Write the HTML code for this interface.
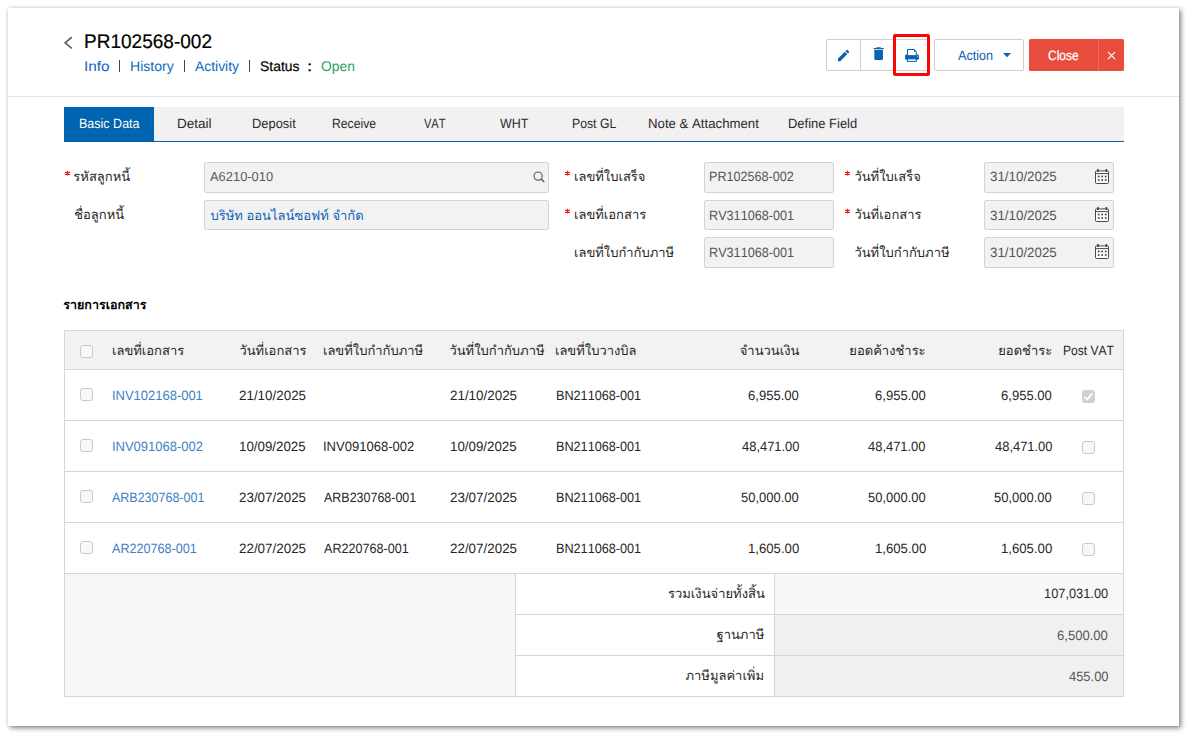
<!DOCTYPE html>
<html lang="th"><head><meta charset="utf-8"><title>PR102568-002</title>
<style>
html,body{margin:0;padding:0}
body{width:1187px;height:734px;position:relative;overflow:hidden;background:#fff;font-family:"Liberation Sans",sans-serif;font-kerning:none;text-rendering:geometricPrecision}
div,span.t,svg.th,svg.ic{position:absolute;box-sizing:border-box}
span.t{white-space:nowrap;line-height:normal;transform-origin:0 0}
svg.th,svg.ic{overflow:visible}
svg.th text{font-family:"Liberation Sans",sans-serif;font-size:13px}
a{color:inherit;text-decoration:none}
</style></head><body>
<div style="left:8px;top:8px;width:1171px;height:718px;background:#fff;box-shadow:2px 2px 5px rgba(0,0,0,.48),0 0 3px rgba(0,0,0,.1)"></div>
<div style="left:8px;top:96px;width:1171px;height:1px;background:#e3e3e3"></div>
<svg class="ic" style="left:62px;top:35px" width="14" height="16"><path d="M9.8 2.2 L3.2 7.8 L9.8 13.4" fill="none" stroke="#595959" stroke-width="1.6"/></svg>
<span class="t" style="left:83.64px;top:30.80px;font-size:19.7px;color:#000;transform:scaleX(0.9667);-webkit-text-stroke:.2px #000;">PR102568-002</span>
<span class="t" style="left:83.58px;top:58.20px;font-size:14px;color:#0d69bd;transform:scaleX(1.0991);">Info</span>
<div style="left:119px;top:60px;width:1px;height:12px;background:#4b3d52"></div>
<span class="t" style="left:129.55px;top:58.20px;font-size:14px;color:#0d69bd;transform:scaleX(1.0051);">History</span>
<div style="left:184px;top:60px;width:1px;height:12px;background:#4b3d52"></div>
<span class="t" style="left:194.87px;top:58.20px;font-size:14px;color:#0d69bd;transform:scaleX(0.9913);">Activity</span>
<div style="left:249px;top:60px;width:1px;height:12px;background:#4b3d52"></div>
<span class="t" style="left:259.77px;top:58.20px;font-size:14px;color:#000;transform:scaleX(0.9936);-webkit-text-stroke:.2px #000;">Status</span>
<span class="t" style="left:306.87px;top:58.20px;font-size:14px;color:#000;transform:scaleX(1.3503);-webkit-text-stroke:.3px #000;">:</span>
<span class="t" style="left:320.94px;top:58.20px;font-size:14px;color:#2aa05c;transform:scaleX(0.9885);">Open</span>
<div style="left:826px;top:39px;width:104px;height:32px;border:1px solid #cfcfcf;border-radius:2px;background:#fff"></div>
<div style="left:860px;top:40px;width:1px;height:30px;background:#cfcfcf"></div>
<div style="left:894px;top:40px;width:1px;height:30px;background:#cfcfcf"></div>
<svg class="ic" style="left:835.92px;top:47.92px" width="15.00" height="15.00" viewBox="0 0 24 24"><path fill="#0b62b0" d="M3 17.25V21h3.75L17.81 9.94l-3.75-3.75L3 17.25zM20.71 7.04c.39-.39.39-1.02 0-1.41l-2.34-2.34c-.39-.39-1.02-.39-1.41 0l-1.83 1.83 3.75 3.75 1.83-1.83z"/></svg>
<svg class="ic" style="left:869.70px;top:45.44px" width="17.28" height="17.28" viewBox="0 0 24 24"><path fill="#0b62b0" d="M6 19c0 1.1.9 2 2 2h8c1.1 0 2-.9 2-2V7H6v12zM19 4h-3.5l-1-1h-5l-1 1H5v2h14V4z"/></svg>
<svg class="ic" style="left:904px;top:48px" width="16" height="15" viewBox="0 0 16 15"><rect x="1.1" y="6.5" width="13.8" height="5.3" rx="1.2" fill="#0b62b0"/><path d="M3.5 7.7V1.5h6.7l2.1 2.1v4.1z" fill="#fff" stroke="#0b62b0" stroke-width="1"/><path d="M10 1.4v2.4h2.4z" fill="#0b62b0"/><rect x="3.5" y="10.9" width="8.8" height="2.5" fill="#fff" stroke="#0b62b0" stroke-width="1"/><circle cx="13.5" cy="8.3" r=".55" fill="#cfe0f0"/></svg>
<div style="left:893px;top:33.6px;width:37.4px;height:42.5px;border:3px solid #fb0606;border-radius:2px"></div>
<div style="left:934px;top:39px;width:90px;height:32px;border:1px solid #cfcfcf;border-radius:2px;background:#fff"></div>
<span class="t" style="left:957.88px;top:47.90px;font-size:13.5px;color:#0b62b0;transform:scaleX(0.9367);">Action</span>
<svg class="ic" style="left:1003px;top:53.3px" width="8" height="5"><path d="M0 0h8L4 4.2z" fill="#0b62b0"/></svg>
<div style="left:1029px;top:39px;width:95px;height:32px;background:#e74c3c;border-radius:1.5px"></div>
<div style="left:1098px;top:39px;width:1px;height:32px;background:#ec6a5c"></div>
<span class="t" style="left:1048.39px;top:47.90px;font-size:13.5px;color:#fff;transform:scaleX(0.8878);-webkit-text-stroke:.25px #fff;">Close</span>
<svg class="ic" style="left:1107px;top:50.8px" width="9" height="9"><path d="M.9 .9l7.2 7.2M8.1 .9L.9 8.1" stroke="#fff" stroke-width="1.1" fill="none"/></svg>
<div style="left:64px;top:107px;width:1060px;height:34px;background:#f1f1f1"></div>
<div style="left:64px;top:141px;width:1060px;height:1px;background:#0a5fae"></div>
<div style="left:64px;top:107px;width:90px;height:35px;background:#0064b1"></div>
<span class="t" style="left:78.67px;top:116.30px;font-size:13.5px;color:#fff;transform:scaleX(0.9272);">Basic Data</span>
<span class="t" style="left:176.89px;top:116.30px;font-size:13.5px;color:#2b2b2b;transform:scaleX(1.0029);">Detail</span>
<span class="t" style="left:252.34px;top:116.30px;font-size:13.5px;color:#2b2b2b;transform:scaleX(0.9559);">Deposit</span>
<span class="t" style="left:332.00px;top:116.30px;font-size:13.5px;color:#2b2b2b;transform:scaleX(0.9030);">Receive</span>
<span class="t" style="left:423.95px;top:116.30px;font-size:13.5px;color:#2b2b2b;transform:scaleX(0.8190);">VAT</span>
<span class="t" style="left:500.25px;top:116.30px;font-size:13.5px;color:#2b2b2b;transform:scaleX(0.9220);">WHT</span>
<span class="t" style="left:571.90px;top:116.30px;font-size:13.5px;color:#2b2b2b;transform:scaleX(0.9065);">Post GL</span>
<span class="t" style="left:648.22px;top:116.30px;font-size:13.5px;color:#2b2b2b;transform:scaleX(0.9786);">Note &amp; Attachment</span>
<span class="t" style="left:787.94px;top:116.30px;font-size:13.5px;color:#2b2b2b;transform:scaleX(0.9606);">Define Field</span>
<svg class="ic" style="left:63.8px;top:170.2px" width="7" height="7"><path d="M3.5 .8v4.8M1 2l5 2.4M6 2L1 4.4" stroke="#ee1111" stroke-width="1.15" fill="none"/></svg>
<svg class="ic" style="left:563.8px;top:170.2px" width="7" height="7"><path d="M3.5 .8v4.8M1 2l5 2.4M6 2L1 4.4" stroke="#ee1111" stroke-width="1.15" fill="none"/></svg>
<svg class="ic" style="left:563.8px;top:208.2px" width="7" height="7"><path d="M3.5 .8v4.8M1 2l5 2.4M6 2L1 4.4" stroke="#ee1111" stroke-width="1.15" fill="none"/></svg>
<svg class="ic" style="left:844.0px;top:170.2px" width="7" height="7"><path d="M3.5 .8v4.8M1 2l5 2.4M6 2L1 4.4" stroke="#ee1111" stroke-width="1.15" fill="none"/></svg>
<svg class="ic" style="left:844.0px;top:208.2px" width="7" height="7"><path d="M3.5 .8v4.8M1 2l5 2.4M6 2L1 4.4" stroke="#ee1111" stroke-width="1.15" fill="none"/></svg>
<svg class="th" role="img" aria-label="รหัสลูกหนี้" style="left:72.10px;top:166.17px" width="58.50" height="20.11"><text x="1.36" y="14.93" fill="#262626">รหัสลูกหนี้</text></svg>
<svg class="th" role="img" aria-label="ชื่อลูกหนี้" style="left:72.50px;top:204.47px" width="51.90" height="20.11"><text x="1.18" y="14.93" fill="#262626">ชื่อลูกหนี้</text></svg>
<div style="left:204px;top:162px;width:345px;height:31px;background:#f2f2f2;border:1px solid #d4d4d4;border-radius:2px"></div>
<span class="t" style="left:210.17px;top:169.10px;font-size:13px;color:#5a5a5a;transform:scaleX(0.9924);">A6210-010</span>
<svg class="ic" style="left:532px;top:170px" width="14" height="14"><circle cx="6.1" cy="6.1" r="4.1" fill="none" stroke="#555" stroke-width="1.1"/><path d="M9.1 9.1l3.1 2.9" stroke="#555" stroke-width="1.4"/></svg>
<div style="left:204px;top:200px;width:345px;height:30px;background:#f2f2f2;border:1px solid #d4d4d4;border-radius:2px"></div>
<svg class="th" role="img" aria-label="บริษัท ออนไลน์ซอฟท์ จำกัด" style="left:208.70px;top:206.85px" width="153.90" height="15.02"><text x="1.53" y="12.95" fill="#0b62b0">บริษัท ออนไลน์ซอฟท์ จำกัด</text></svg>
<svg class="th" role="img" aria-label="เลขที่ใบเสร็จ" style="left:572.90px;top:165.85px" width="71.00" height="16.61"><text x="0.97" y="14.55" fill="#262626">เลขที่ใบเสร็จ</text></svg>
<svg class="th" role="img" aria-label="เลขที่เอกสาร" style="left:572.90px;top:204.15px" width="71.70" height="16.61"><text x="0.99" y="14.55" fill="#262626">เลขที่เอกสาร</text></svg>
<svg class="th" role="img" aria-label="เลขที่ใบกำกับภาษี" style="left:572.90px;top:241.75px" width="100.00" height="16.61"><text x="0.97" y="14.55" fill="#262626">เลขที่ใบกำกับภาษี</text></svg>
<div style="left:704px;top:162px;width:130px;height:31px;background:#f2f2f2;border:1px solid #d4d4d4;border-radius:2px"></div>
<div style="left:704px;top:200px;width:130px;height:30px;background:#f2f2f2;border:1px solid #d4d4d4;border-radius:2px"></div>
<div style="left:704px;top:237px;width:130px;height:31px;background:#f2f2f2;border:1px solid #d4d4d4;border-radius:2px"></div>
<span class="t" style="left:709.27px;top:169.40px;font-size:13.5px;color:#555;transform:scaleX(0.9333);">PR102568-002</span>
<span class="t" style="left:709.26px;top:207.70px;font-size:13.5px;color:#555;transform:scaleX(0.9365);">RV311068-001</span>
<span class="t" style="left:709.26px;top:245.30px;font-size:13.5px;color:#555;transform:scaleX(0.9365);">RV311068-001</span>
<svg class="th" role="img" aria-label="วันที่ใบเสร็จ" style="left:853.10px;top:165.85px" width="64.70" height="16.61"><text x="1.43" y="14.55" fill="#262626">วันที่ใบเสร็จ</text></svg>
<svg class="th" role="img" aria-label="วันที่เอกสาร" style="left:853.10px;top:204.15px" width="65.40" height="16.61"><text x="1.43" y="14.55" fill="#262626">วันที่เอกสาร</text></svg>
<svg class="th" role="img" aria-label="วันที่ใบกำกับภาษี" style="left:853.10px;top:241.75px" width="93.70" height="16.61"><text x="1.42" y="14.55" fill="#262626">วันที่ใบกำกับภาษี</text></svg>
<div style="left:984px;top:162px;width:130px;height:31px;background:#f2f2f2;border:1px solid #d4d4d4;border-radius:2px"></div>
<span class="t" style="left:989.89px;top:169.40px;font-size:13.5px;color:#555;transform:scaleX(0.9882);">31/10/2025</span>
<svg class="ic" style="left:1095px;top:169px" width="14" height="15"><rect x=".5" y="1.9" width="13" height="12.6" rx="1" fill="#fafafa" stroke="#4a4a4a"/><path d="M.5 4.6h13" stroke="#4a4a4a"/><path d="M3 0v3M11.4 0v3" stroke="#3a3a3a" stroke-width="1.5"/><rect x="2.9" y="6.7" width="1.6" height="1.6" fill="#3a3a3a"/><rect x="6.4" y="6.7" width="1.6" height="1.6" fill="#3a3a3a"/><rect x="9.9" y="6.7" width="1.6" height="1.6" fill="#3a3a3a"/><rect x="2.9" y="10.2" width="1.6" height="1.6" fill="#3a3a3a"/><rect x="6.4" y="10.2" width="1.6" height="1.6" fill="#3a3a3a"/><rect x="9.9" y="10.2" width="1.6" height="1.6" fill="#3a3a3a"/></svg>
<div style="left:984px;top:200px;width:130px;height:30px;background:#f2f2f2;border:1px solid #d4d4d4;border-radius:2px"></div>
<span class="t" style="left:989.89px;top:207.70px;font-size:13.5px;color:#555;transform:scaleX(0.9882);">31/10/2025</span>
<svg class="ic" style="left:1095px;top:207px" width="14" height="15"><rect x=".5" y="1.9" width="13" height="12.6" rx="1" fill="#fafafa" stroke="#4a4a4a"/><path d="M.5 4.6h13" stroke="#4a4a4a"/><path d="M3 0v3M11.4 0v3" stroke="#3a3a3a" stroke-width="1.5"/><rect x="2.9" y="6.7" width="1.6" height="1.6" fill="#3a3a3a"/><rect x="6.4" y="6.7" width="1.6" height="1.6" fill="#3a3a3a"/><rect x="9.9" y="6.7" width="1.6" height="1.6" fill="#3a3a3a"/><rect x="2.9" y="10.2" width="1.6" height="1.6" fill="#3a3a3a"/><rect x="6.4" y="10.2" width="1.6" height="1.6" fill="#3a3a3a"/><rect x="9.9" y="10.2" width="1.6" height="1.6" fill="#3a3a3a"/></svg>
<div style="left:984px;top:237px;width:130px;height:31px;background:#f2f2f2;border:1px solid #d4d4d4;border-radius:2px"></div>
<span class="t" style="left:989.89px;top:245.30px;font-size:13.5px;color:#555;transform:scaleX(0.9882);">31/10/2025</span>
<svg class="ic" style="left:1095px;top:244px" width="14" height="15"><rect x=".5" y="1.9" width="13" height="12.6" rx="1" fill="#fafafa" stroke="#4a4a4a"/><path d="M.5 4.6h13" stroke="#4a4a4a"/><path d="M3 0v3M11.4 0v3" stroke="#3a3a3a" stroke-width="1.5"/><rect x="2.9" y="6.7" width="1.6" height="1.6" fill="#3a3a3a"/><rect x="6.4" y="6.7" width="1.6" height="1.6" fill="#3a3a3a"/><rect x="9.9" y="6.7" width="1.6" height="1.6" fill="#3a3a3a"/><rect x="2.9" y="10.2" width="1.6" height="1.6" fill="#3a3a3a"/><rect x="6.4" y="10.2" width="1.6" height="1.6" fill="#3a3a3a"/><rect x="9.9" y="10.2" width="1.6" height="1.6" fill="#3a3a3a"/></svg>
<svg class="th" role="img" aria-label="รายการเอกสาร" style="left:62.10px;top:300.01px" width="91.90" height="10.84"><text x="1.32" y="8.79" fill="#000" font-weight="bold" style="font-size:12.5px">รายการเอกสาร</text></svg>
<div style="left:64px;top:330px;width:1060px;height:367px;border:1px solid #d6d6d6;background:#fff"></div>
<div style="left:65px;top:331px;width:1058px;height:38px;background:#f2f2f2"></div>
<div style="left:65px;top:369px;width:1058px;height:1px;background:#d6d6d6"></div>
<div style="left:65px;top:420px;width:1058px;height:1px;background:#d6d6d6"></div>
<div style="left:65px;top:471px;width:1058px;height:1px;background:#d6d6d6"></div>
<div style="left:65px;top:522px;width:1058px;height:1px;background:#d6d6d6"></div>
<div style="left:65px;top:573px;width:1058px;height:1px;background:#d6d6d6"></div>
<div style="left:65px;top:574px;width:450px;height:122px;background:#f7f7f7"></div>
<div style="left:515px;top:574px;width:1px;height:122px;background:#d6d6d6"></div>
<div style="left:774px;top:574px;width:1px;height:122px;background:#d6d6d6"></div>
<div style="left:775px;top:574px;width:348px;height:40px;background:#f8f8f8"></div>
<div style="left:775px;top:615px;width:348px;height:40px;background:#f0f0f0"></div>
<div style="left:775px;top:656px;width:348px;height:40px;background:#f0f0f0"></div>
<div style="left:515px;top:614px;width:608px;height:1px;background:#d6d6d6"></div>
<div style="left:515px;top:655px;width:608px;height:1px;background:#d6d6d6"></div>
<svg class="th" role="img" aria-label="เลขที่เอกสาร" style="left:110.90px;top:340.35px" width="72.60" height="16.61"><text x="0.97" y="14.55" fill="#262626">เลขที่เอกสาร</text></svg>
<svg class="th" role="img" aria-label="วันที่เอกสาร" style="left:237.60px;top:340.35px" width="65.90" height="16.61"><text x="1.43" y="14.55" fill="#262626">วันที่เอกสาร</text></svg>
<svg class="th" role="img" aria-label="เลขที่ใบกำกับภาษี" style="left:321.70px;top:340.35px" width="101.00" height="16.61"><text x="0.96" y="14.55" fill="#262626">เลขที่ใบกำกับภาษี</text></svg>
<svg class="th" role="img" aria-label="วันที่ใบกำกับภาษี" style="left:448.10px;top:340.35px" width="95.00" height="16.61"><text x="1.41" y="14.55" fill="#262626">วันที่ใบกำกับภาษี</text></svg>
<svg class="th" role="img" aria-label="เลขที่ใบวางบิล" style="left:554.30px;top:340.35px" width="81.90" height="16.61"><text x="0.96" y="14.55" fill="#262626">เลขที่ใบวางบิล</text></svg>
<svg class="th" role="img" aria-label="จำนวนเงิน" style="left:742.90px;top:342.96px" width="57.80" height="14.00"><text x="56.4" y="11.94" text-anchor="end" fill="#262626">จำนวนเงิน</text></svg>
<svg class="th" role="img" aria-label="ยอดค้างชำระ" style="left:853.30px;top:342.71px" width="74.00" height="14.25"><text x="72.6" y="12.19" text-anchor="end" fill="#262626">ยอดค้างชำระ</text></svg>
<svg class="th" role="img" aria-label="ยอดชำระ" style="left:1001.40px;top:342.96px" width="52.60" height="14.00"><text x="51.2" y="11.94" text-anchor="end" fill="#262626">ยอดชำระ</text></svg>
<span class="t" style="left:1063.21px;top:342.90px;font-size:13.5px;color:#262626;transform:scaleX(0.8921);">Post VAT</span>
<div style="left:80px;top:345px;width:13px;height:13px;border:1px solid #c9c9c9;border-radius:3px;background:#f8f8f8"></div>
<div style="left:80px;top:388px;width:13px;height:13px;border:1px solid #c9c9c9;border-radius:3px;background:#f8f8f8"></div>
<span class="t" style="left:111.80px;top:388.30px;font-size:13.5px;color:#3b82c4;transform:scaleX(0.9604);">INV102168-001</span>
<span class="t" style="left:238.73px;top:388.30px;font-size:13.5px;color:#262626;transform:scaleX(0.9922);">21/10/2025</span>
<span class="t" style="left:449.93px;top:388.30px;font-size:13.5px;color:#262626;transform:scaleX(0.9922);">21/10/2025</span>
<span class="t" style="left:555.86px;top:388.30px;font-size:13.5px;color:#262626;transform:scaleX(0.9365);">BN211068-001</span>
<span class="t" style="left:748.34px;top:388.30px;font-size:13.5px;color:#262626;transform:scaleX(0.9681);">6,955.00</span>
<span class="t" style="left:874.94px;top:388.30px;font-size:13.5px;color:#262626;transform:scaleX(0.9681);">6,955.00</span>
<span class="t" style="left:1001.24px;top:388.30px;font-size:13.5px;color:#262626;transform:scaleX(0.9681);">6,955.00</span>
<div style="left:1082px;top:390px;width:13px;height:13px;background:#d1d1d1;border-radius:3px"><svg class="ic" style="left:0;top:0" width="13" height="13"><path d="M2.6 6.9l2.6 2.7 5-6.3" fill="none" stroke="#fff" stroke-width="1.9"/></svg></div>
<div style="left:80px;top:439px;width:13px;height:13px;border:1px solid #c9c9c9;border-radius:3px;background:#f8f8f8"></div>
<span class="t" style="left:111.80px;top:439.30px;font-size:13.5px;color:#3b82c4;transform:scaleX(0.9606);">INV091068-002</span>
<span class="t" style="left:239.19px;top:439.30px;font-size:13.5px;color:#262626;transform:scaleX(0.9853);">10/09/2025</span>
<span class="t" style="left:322.50px;top:439.30px;font-size:13.5px;color:#262626;transform:scaleX(0.9649);">INV091068-002</span>
<span class="t" style="left:450.39px;top:439.30px;font-size:13.5px;color:#262626;transform:scaleX(0.9853);">10/09/2025</span>
<span class="t" style="left:555.86px;top:439.30px;font-size:13.5px;color:#262626;transform:scaleX(0.9365);">BN211068-001</span>
<span class="t" style="left:741.70px;top:439.30px;font-size:13.5px;color:#262626;transform:scaleX(0.9574);">48,471.00</span>
<span class="t" style="left:868.30px;top:439.30px;font-size:13.5px;color:#262626;transform:scaleX(0.9574);">48,471.00</span>
<span class="t" style="left:994.60px;top:439.30px;font-size:13.5px;color:#262626;transform:scaleX(0.9574);">48,471.00</span>
<div style="left:1082px;top:441px;width:13px;height:13px;border:1px solid #c9c9c9;border-radius:3px;background:#f8f8f8"></div>
<div style="left:80px;top:490px;width:13px;height:13px;border:1px solid #c9c9c9;border-radius:3px;background:#f8f8f8"></div>
<span class="t" style="left:112.48px;top:490.30px;font-size:13.5px;color:#3b82c4;transform:scaleX(0.9249);">ARB230768-001</span>
<span class="t" style="left:238.73px;top:490.30px;font-size:13.5px;color:#262626;transform:scaleX(0.9922);">23/07/2025</span>
<span class="t" style="left:323.68px;top:490.30px;font-size:13.5px;color:#262626;transform:scaleX(0.9239);">ARB230768-001</span>
<span class="t" style="left:449.93px;top:490.30px;font-size:13.5px;color:#262626;transform:scaleX(0.9922);">23/07/2025</span>
<span class="t" style="left:555.86px;top:490.30px;font-size:13.5px;color:#262626;transform:scaleX(0.9365);">BN211068-001</span>
<span class="t" style="left:741.48px;top:490.30px;font-size:13.5px;color:#262626;transform:scaleX(0.9612);">50,000.00</span>
<span class="t" style="left:868.08px;top:490.30px;font-size:13.5px;color:#262626;transform:scaleX(0.9612);">50,000.00</span>
<span class="t" style="left:994.38px;top:490.30px;font-size:13.5px;color:#262626;transform:scaleX(0.9612);">50,000.00</span>
<div style="left:1082px;top:492px;width:13px;height:13px;border:1px solid #c9c9c9;border-radius:3px;background:#f8f8f8"></div>
<div style="left:80px;top:541px;width:13px;height:13px;border:1px solid #c9c9c9;border-radius:3px;background:#f8f8f8"></div>
<span class="t" style="left:112.48px;top:541.30px;font-size:13.5px;color:#3b82c4;transform:scaleX(0.9330);">AR220768-001</span>
<span class="t" style="left:238.73px;top:541.30px;font-size:13.5px;color:#262626;transform:scaleX(0.9922);">22/07/2025</span>
<span class="t" style="left:323.68px;top:541.30px;font-size:13.5px;color:#262626;transform:scaleX(0.9319);">AR220768-001</span>
<span class="t" style="left:449.93px;top:541.30px;font-size:13.5px;color:#262626;transform:scaleX(0.9922);">22/07/2025</span>
<span class="t" style="left:555.86px;top:541.30px;font-size:13.5px;color:#262626;transform:scaleX(0.9365);">BN211068-001</span>
<span class="t" style="left:748.00px;top:541.30px;font-size:13.5px;color:#262626;transform:scaleX(0.9746);">1,605.00</span>
<span class="t" style="left:874.60px;top:541.30px;font-size:13.5px;color:#262626;transform:scaleX(0.9746);">1,605.00</span>
<span class="t" style="left:1000.90px;top:541.30px;font-size:13.5px;color:#262626;transform:scaleX(0.9746);">1,605.00</span>
<div style="left:1082px;top:543px;width:13px;height:13px;border:1px solid #c9c9c9;border-radius:3px;background:#f8f8f8"></div>
<svg class="th" role="img" aria-label="รวมเงินจ่ายทั้งสิ้น" style="left:671.50px;top:582.77px" width="94.20" height="16.99"><text x="92.8" y="14.93" text-anchor="end" fill="#262626">รวมเงินจ่ายทั้งสิ้น</text></svg>
<svg class="th" role="img" aria-label="ฐานภาษี" style="left:717.00px;top:626.56px" width="48.70" height="17.50"><text x="47.3" y="12.34" text-anchor="end" fill="#262626">ฐานภาษี</text></svg>
<svg class="th" role="img" aria-label="ภาษีมูลค่าเพิ่ม" style="left:687.30px;top:664.95px" width="78.40" height="19.73"><text x="77.0" y="14.55" text-anchor="end" fill="#262626">ภาษีมูลค่าเพิ่ม</text></svg>
<span class="t" style="left:1043.92px;top:585.80px;font-size:13.5px;color:#2b2b2b;transform:scaleX(0.9499);">107,031.00</span>
<span class="t" style="left:1057.24px;top:628.30px;font-size:13.5px;color:#555;transform:scaleX(0.9681);">6,500.00</span>
<span class="t" style="left:1068.60px;top:669.30px;font-size:13.5px;color:#555;transform:scaleX(0.9566);">455.00</span>
</body></html>
